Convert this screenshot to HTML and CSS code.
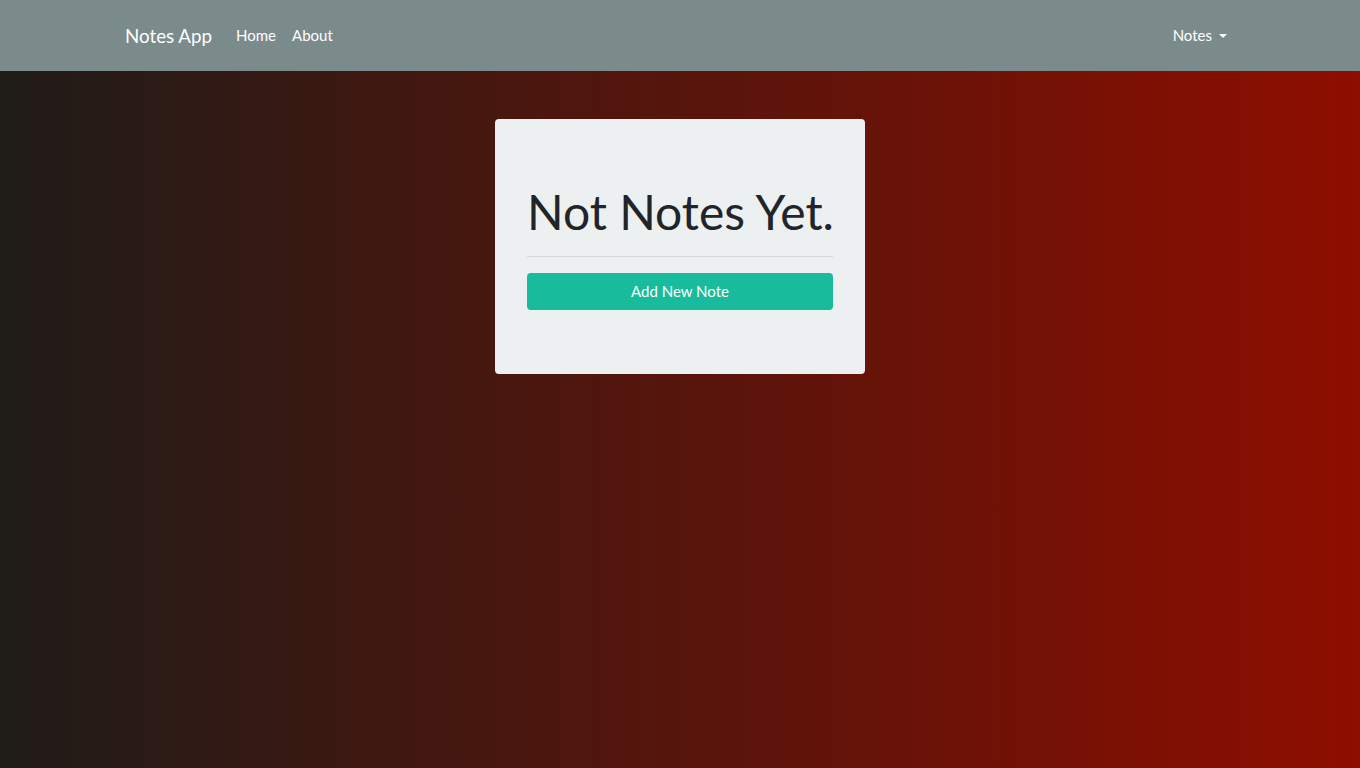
FILE: index.html
```html
<!DOCTYPE html>
<html lang="en">
<head>
<meta charset="utf-8">
<title>Notes App</title>
<link rel="stylesheet" href="styles.css">
</head>
<body>
<nav class="navbar">
  <div class="container nav-inner">
    <a class="brand" href="#">Notes App</a>
    <ul class="nav-links">
      <li><a class="nav-link" href="#">Home</a></li>
      <li><a class="nav-link" href="#">About</a></li>
    </ul>
    <ul class="nav-links nav-right">
      <li><a class="nav-link dropdown-toggle" href="#">Notes</a></li>
    </ul>
  </div>
</nav>
<main class="main">
  <div class="card">
    <h1 class="title">Not Notes Yet.</h1>
    <hr class="divider">
    <a class="btn" href="#">Add New Note</a>
  </div>
</main>
</body>
</html>
```
FILE: styles.css
```css
* { box-sizing: border-box; }
html, body { margin: 0; height: 100%; }
body {
  font-family: Lato, "Liberation Sans", sans-serif;
  font-size: 15px;
  color: #212529;
  background: linear-gradient(to right, #1f1c18, #8e0e00);
  min-height: 768px;
}
a { text-decoration: none; }
.container { width: 1140px; margin: 0 auto; padding: 0 15px; }
.navbar { background: #7b8a8b; height: 71px; }
.nav-inner { display: flex; align-items: center; height: 71px; }
.brand { color: #fff; font-size: 18.75px; margin-right: 16px; line-height: 1; padding-top: 2px; }
.nav-links { list-style: none; display: flex; margin: 0; padding: 0; }
.nav-right { margin-left: auto; }
.nav-link { display: block; color: #fff; padding: 7px 8px 9px; font-size: 15px; }
.dropdown-toggle::after {
  content: "";
  display: inline-block;
  margin-left: 7px;
  vertical-align: 3px;
  border-top: 4.5px solid #fff;
  border-left: 4.5px solid transparent;
  border-right: 4.5px solid transparent;
}
.main { padding-top: 48px; }
.card {
  width: 370px;
  margin: 0 auto;
  background: #ecf0f1;
  border-radius: 4px;
  padding: 64px 32px;
}
.title {
  margin: 0;
  font-size: 48px;
  font-weight: 400;
  line-height: 1.2;
  text-align: center;
  white-space: nowrap;
  color: #212529;
}
.divider { border: 0; border-top: 1px solid rgba(0,0,0,0.1); margin: 15px 0 16px; }
.btn {
  display: block;
  background: #18bc9c;
  color: #fff;
  text-align: center;
  border-radius: 4px;
  height: 37px;
  line-height: 37px;
  font-size: 15px;
}
```
